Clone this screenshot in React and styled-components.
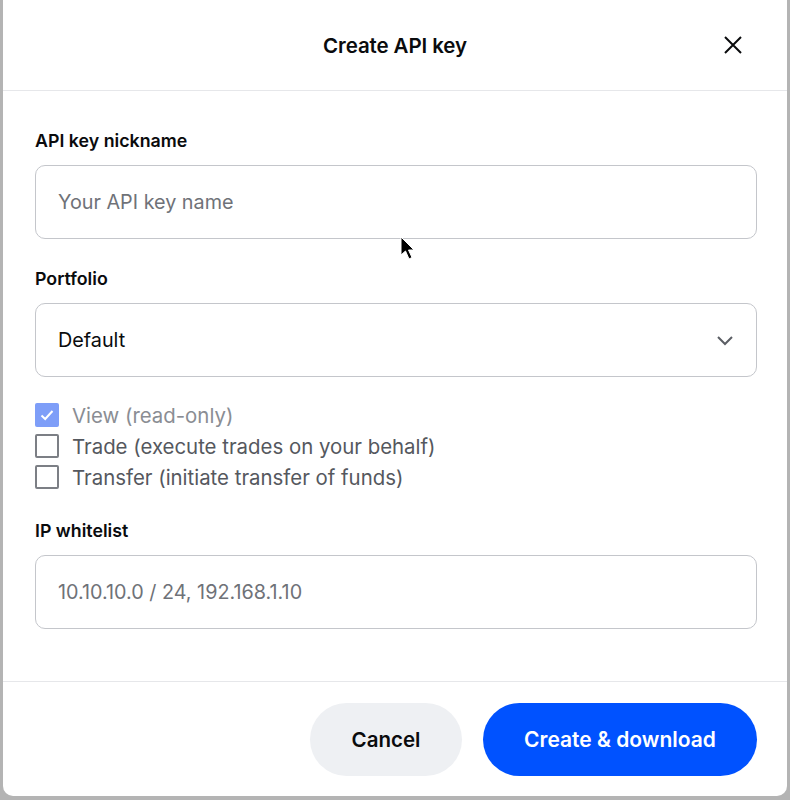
import React from 'react'
import styled, { createGlobalStyle } from 'styled-components'

const GlobalStyle = createGlobalStyle`
  html, body {
    margin: 0;
    padding: 0;
    background: #b4b4b4;
    font-family: Inter, "Noto Sans", "Liberation Sans", sans-serif;
  }
`

const Page = styled.div`
  width: 790px;
  height: 800px;
  overflow: hidden;
  position: relative;
`

const Modal = styled.div`
  margin-left: 3px;
  width: 784px;
  height: 796px;
  background: #fff;
  border-radius: 0 0 10px 10px;
  display: flex;
  flex-direction: column;
`

const Header = styled.div`
  height: 90px;
  flex-shrink: 0;
  display: grid;
  grid-template-columns: 90px 1fr 90px;
  align-items: center;
  border-bottom: 1px solid #e6e7ea;
`

const Title = styled.h2`
  grid-column: 2;
  margin: 0;
  text-align: center;
  font-size: 20.5px;
  font-weight: 600;
  color: #0a0b0d;
  letter-spacing: -0.1px;
`

const CloseButton = styled.button`
  grid-column: 3;
  justify-self: start;
  margin-left: 16px;
  width: 40px;
  height: 40px;
  border: none;
  background: none;
  padding: 0;
  display: flex;
  align-items: center;
  justify-content: center;
  cursor: pointer;
`

const Body = styled.div`
  flex: 1;
  padding: 40px 30px 0 32px;
  border-bottom: 1px solid #e6e7ea;
`

const Label = styled.div`
  font-size: 17.8px;
  font-weight: 600;
  color: #0a0b0d;
  line-height: 20px;
  margin-top: ${p => p.$top || 0}px;
  margin-bottom: 14px;
`

const Field = styled.div`
  height: 72px;
  border: 1px solid #c4c6cb;
  border-radius: 10px;
  padding: 0 22px;
  display: flex;
  align-items: center;
  justify-content: space-between;
  font-size: 19.8px;
  color: ${p => (p.$muted ? '#6f7278' : '#0a0b0d')};
`

const Checks = styled.div`
  margin-top: 26px;
  display: flex;
  flex-direction: column;
  gap: 7px;
`

const CheckRow = styled.label`
  display: flex;
  align-items: center;
  gap: 13px;
  height: 24px;
  font-size: 20.4px;
  color: ${p => (p.$disabled ? '#8a8d93' : '#55585e')};
`

const Box = styled.span`
  width: 24px;
  height: 24px;
  box-sizing: border-box;
  border-radius: 2px;
  border: ${p => (p.$checked ? 'none' : '2px solid #7c7f85')};
  background: ${p => (p.$checked ? '#7e9ef8' : '#fff')};
  display: flex;
  align-items: center;
  justify-content: center;
`

const Footer = styled.div`
  height: 114px;
  flex-shrink: 0;
  display: flex;
  justify-content: flex-end;
  align-items: flex-start;
  gap: 21px;
  padding: 21px 30px 0 0;
  box-sizing: border-box;
`

const Button = styled.button`
  height: 73px;
  border: none;
  border-radius: 37px;
  padding: 0;
  width: ${p => p.$width}px;
  font-family: inherit;
  font-size: ${p => (p.$primary ? 21 : 20.5)}px;
  font-weight: 600;
  background: ${p => (p.$primary ? '#0052ff' : '#eef0f3')};
  color: ${p => (p.$primary ? '#fff' : '#0a0b0d')};
  cursor: pointer;
`

const Pointer = styled.svg`
  position: absolute;
  left: 400px;
  top: 236px;
`

const Check = ({ checked, disabled, children }) => (
  <CheckRow $disabled={disabled}>
    <Box $checked={checked}>
      {checked && (
        <svg width="16" height="16" viewBox="0 0 16 16">
          <path d="M2.5 8.5 L6.2 12 L13.5 4" fill="none" stroke="#fff" strokeWidth="2" />
        </svg>
      )}
    </Box>
    {children}
  </CheckRow>
)

export default function App() {
  return (
    <Page>
      <GlobalStyle />
      <Modal>
        <Header>
          <Title>Create API key</Title>
          <CloseButton aria-label="Close">
            <svg width="20" height="20" viewBox="0 0 20 20">
              <path d="M2 2 L18 18 M18 2 L2 18" stroke="#0a0b0d" strokeWidth="2" />
            </svg>
          </CloseButton>
        </Header>
        <Body>
          <Label>API key nickname</Label>
          <Field $muted>Your API key name</Field>
          <Label $top={30}>Portfolio</Label>
          <Field>
            Default
            <svg width="18" height="12" viewBox="0 0 18 12">
              <path d="M2 3 L9 10 L16 3" fill="none" stroke="#5b5e64" strokeWidth="2" />
            </svg>
          </Field>
          <Checks>
            <Check checked disabled>View (read-only)</Check>
            <Check>Trade (execute trades on your behalf)</Check>
            <Check>Transfer (initiate transfer of funds)</Check>
          </Checks>
          <Label $top={32}>IP whitelist</Label>
          <Field $muted>10.10.10.0 / 24, 192.168.1.10</Field>
        </Body>
        <Footer>
          <Button $width={152}>Cancel</Button>
          <Button $primary $width={274}>Create &amp; download</Button>
        </Footer>
      </Modal>
      <Pointer width="16" height="26" viewBox="0 0 16 26">
        <path d="M1 1 L1 19 L5.5 15 L9 23 L12 21.5 L8.5 14 L14 14 Z" fill="#000" stroke="#fff" strokeWidth="1" />
      </Pointer>
    </Page>
  )
}
